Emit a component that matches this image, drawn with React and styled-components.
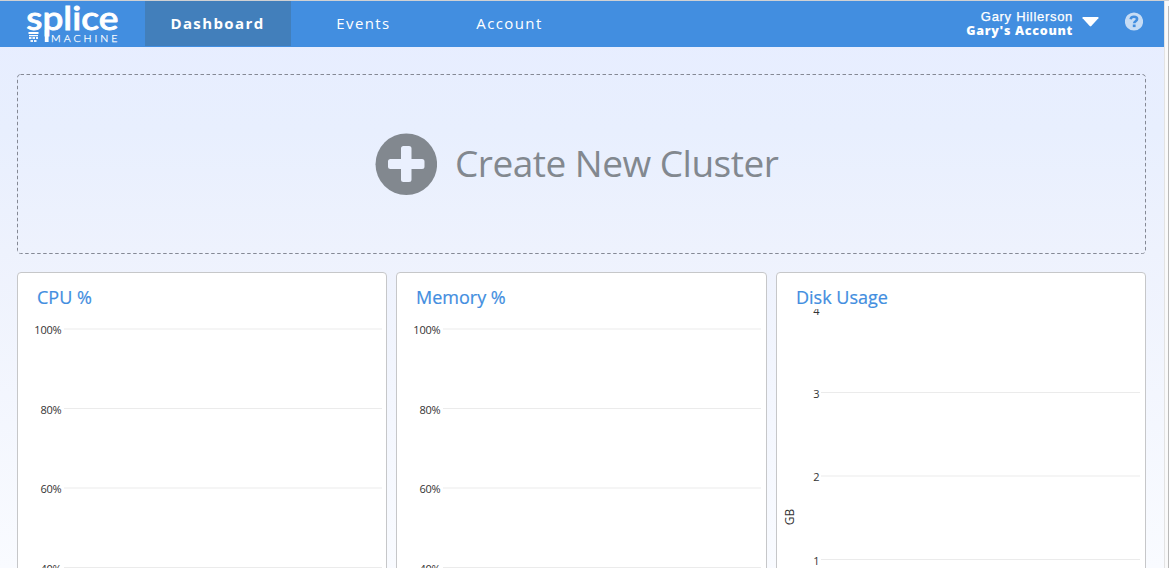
import React from 'react';
import styled, { createGlobalStyle } from 'styled-components';

const GlobalStyle = createGlobalStyle`
  * { box-sizing: border-box; }
  html, body { margin: 0; height: 100%; overflow: hidden; }
  body { font-family: 'Open Sans', 'Noto Sans', sans-serif; }
`;

const Window = styled.div`
  display: flex;
  height: 568px;
  width: 1169px;
  border-top: 1px solid #d0d1d3;
  overflow: hidden;
`;

const Page = styled.div`
  width: 1164px;
  height: 567px;
  overflow: hidden;
  background: linear-gradient(180deg, #e7edff 0, #e8effe 130px, #eef2fd 250px, #f9fbff 567px);
`;

const ScrollTrack = styled.div`
  flex: 1;
  background: #fafafa;
  border-left: 1px solid #e3e3e3;
  display: flex;
  justify-content: flex-end;
  padding-top: 5px;
`;

const ScrollEdge = styled.div`
  width: 1px;
  background: #b9b9b9;
`;

const Header = styled.header`
  display: flex;
  height: 46px;
  background: #428ee0;
  color: #fff;
`;

const LogoLink = styled.div`
  width: 145px;
  height: 46px;
  svg { display: block; }
`;

const NavItem = styled.div`
  width: 146px;
  height: 45px;
  padding-right: 1px;
  text-align: center;
  line-height: 45px;
  font-size: 15px;
  letter-spacing: 1.4px;
  font-weight: ${(p) => (p.$active ? 700 : 400)};
  background: ${(p) => (p.$active ? '#427fbb' : 'transparent')};
`;

const UserArea = styled.div`
  margin-left: auto;
  display: flex;
  align-items: flex-start;
  padding-right: 21px;
`;

const UserNames = styled.div`
  padding-top: 9px;
  text-align: right;
  white-space: nowrap;
`;

const UserName = styled.div`
  font: 13px/14px 'Liberation Sans', Arial, sans-serif;
  letter-spacing: 0.7px;
  -webkit-text-stroke: 0.25px #fff;
`;

const AccountName = styled.div`
  font-size: 12.5px;
  line-height: 14px;
  font-weight: 800;
  letter-spacing: 0.7px;
`;

const Caret = styled.svg`
  display: block;
  margin: 16px 26px 0 9px;
`;

const HelpIcon = styled.svg`
  display: block;
  margin-top: 11px;
`;

const Main = styled.main`
  padding: 27px 18px 0 17px;
`;

const CreateBox = styled.div`
  height: 180px;
  display: flex;
  align-items: center;
  padding-left: 358px;
  color: #82888f;
  font-size: 37px;
`;

const BoxOutline = styled.svg`
  display: block;
  height: 180px;
  width: 1129px;
  margin-bottom: -180px;
`;

const PlusIcon = styled.svg`
  display: block;
  flex: none;
  margin-right: 18px;
`;

const CreateLabel = styled.span`
  line-height: 52px;
  margin-top: -2px;
  letter-spacing: -0.5px;
  white-space: nowrap;
`;

const Cards = styled.div`
  display: grid;
  grid-template-columns: 370px 371px 370px;
  gap: 9px;
  margin-top: 18px;
`;

const Card = styled.section`
  height: 400px;
  background: #fff;
  border: 1px solid #c6c7c9;
  border-radius: 4px;
  overflow: hidden;
`;

const CardTitle = styled.h2`
  margin: 12px 0 0 19px;
  height: 24px;
  line-height: 25px;
  font-size: 18px;
  font-weight: 400;
  color: #428ee0;
  white-space: nowrap;
  -webkit-text-stroke: 0.2px #428ee0;
`;

const Plot = styled.svg`
  display: block;
  overflow: hidden;
  text {
    font-family: 'Open Sans', 'Noto Sans', sans-serif;
    font-size: 11px;
    fill: #333;
  }
`;

function Logo() {
  return (
    <LogoLink>
      <svg width="145" height="46" viewBox="0 1 145 46" fill="#fff">
        <text x="26.300" y="30" fontFamily="Lato, sans-serif" fontSize="33" fontWeight="500" stroke="#fff" strokeWidth="0.9" textLength="92" lengthAdjust="spacingAndGlyphs">splice</text>
        <rect x="44.800" y="30" width="3.800" height="12" />
        <text x="51" y="42" fontFamily="Lato, sans-serif" fontSize="10.6" fontWeight="300" stroke="#fff" strokeWidth="0.25" textLength="66.500" lengthAdjust="spacing">MACHINE</text>
        <path d="M28.500 32h10v2h-10zM29 35h9v1.200h-9z" />
        <path d="M29 37h2.500v2H29zM32.500 37H35v2h-2.500zM36 37h2v2h-2zM30.500 40H33v2h-2.500zM34 40h2.500v2H34z" opacity=".9" />
      </svg>
    </LogoLink>
  );
}

const percentTicks = [
  { y: 19.5, label: '100%' },
  { y: 99, label: '80%' },
  { y: 178.5, label: '60%' },
  { y: 258, label: '40%' },
];

const diskTicks = [
  { y: 0, label: '4' },
  { y: 83, label: '3' },
  { y: 166.5, label: '2' },
  { y: 250, label: '1' },
];

function Chart({ ticks, labelX, lineX, lineEnd = 364, unit }) {
  return (
    <Plot width="369" height="360" viewBox="0 0 369 360">
      {ticks.map((t) => (
        <g key={t.label}>
          {t.y > 5 && <line x1={lineX} x2={lineEnd} y1={t.y + 0.5} y2={t.y + 0.5} stroke="#ebebeb" />}
          <text x={labelX} y={Math.round(t.y + 5.5)} textAnchor="end" letterSpacing={t.label.endsWith('%') ? -0.2 : 0}>{t.label}</text>
        </g>
      ))}
      {unit && <text transform="translate(17 208) rotate(-90)" textAnchor="middle" style={{ fontSize: 12 }}>{unit}</text>}
    </Plot>
  );
}

export default function App() {
  return (
    <>
      <GlobalStyle />
      <Window>
        <Page>
          <Header>
            <Logo />
            <NavItem $active>Dashboard</NavItem>
            <NavItem>Events</NavItem>
            <NavItem>Account</NavItem>
            <UserArea>
              <UserNames>
                <UserName>Gary Hillerson</UserName>
                <AccountName>Gary's Account</AccountName>
              </UserNames>
              <Caret width="17" height="10" viewBox="0 0 17 10">
                <path d="M1 0h15q1 .4.4 1.200L9.300 9q-.8.8-1.600 0L.6 1.200Q0 .3 1 0z" fill="#fff" />
              </Caret>
              <HelpIcon width="18" height="19" viewBox="0 0 18 19">
                <circle cx="9" cy="9.500" r="9.100" fill="#c6dcf5" />
                <path d="M5.600 7.200c.4-1.700 1.600-2.400 3.300-2.400 1.900 0 3.200.9 3.200 2.300 0 2.200-2.900 2-2.900 4.200" fill="none" stroke="#428ee0" strokeWidth="2.600" />
                <rect x="7.800" y="12.500" width="2.800" height="2.600" fill="#428ee0" />
              </HelpIcon>
            </UserArea>
          </Header>
          <Main>
            <BoxOutline>
              <rect x="0.500" y="0.500" width="1128" height="179" rx="3" fill="none" stroke="#858995" strokeDasharray="3.500 2.500" />
            </BoxOutline>
            <CreateBox>
              <PlusIcon width="62" height="62" viewBox="0 0 62 62">
                <circle cx="31.300" cy="31.200" r="30.800" fill="#82888f" />
                <path d="M28.500 13h5.500a2.500 2.500 0 0 1 2.500 2.500V26H47a2.500 2.500 0 0 1 2.500 2.500v5A2.500 2.500 0 0 1 47 36H36.500v10.500A2.500 2.500 0 0 1 34 49h-5.500a2.500 2.500 0 0 1-2.500-2.500V36H15.500a2.500 2.500 0 0 1-2.500-2.500v-5a2.500 2.500 0 0 1 2.500-2.500H26V15.500A2.500 2.500 0 0 1 28.500 13z" fill="#eaf0fe" />
              </PlusIcon>
              <CreateLabel>Create New Cluster</CreateLabel>
            </CreateBox>
            <Cards>
              <Card>
                <CardTitle>CPU %</CardTitle>
                <Chart ticks={percentTicks} labelX={43.5} lineX={46} />
              </Card>
              <Card>
                <CardTitle>Memory %</CardTitle>
                <Chart ticks={percentTicks} labelX={43.5} lineX={46} />
              </Card>
              <Card>
                <CardTitle>Disk Usage</CardTitle>
                <Chart ticks={diskTicks} labelX={42.5} lineX={44} lineEnd={363} unit="GB" />
              </Card>
            </Cards>
          </Main>
        </Page>
        <ScrollTrack>
          <ScrollEdge />
        </ScrollTrack>
      </Window>
    </>
  );
}
